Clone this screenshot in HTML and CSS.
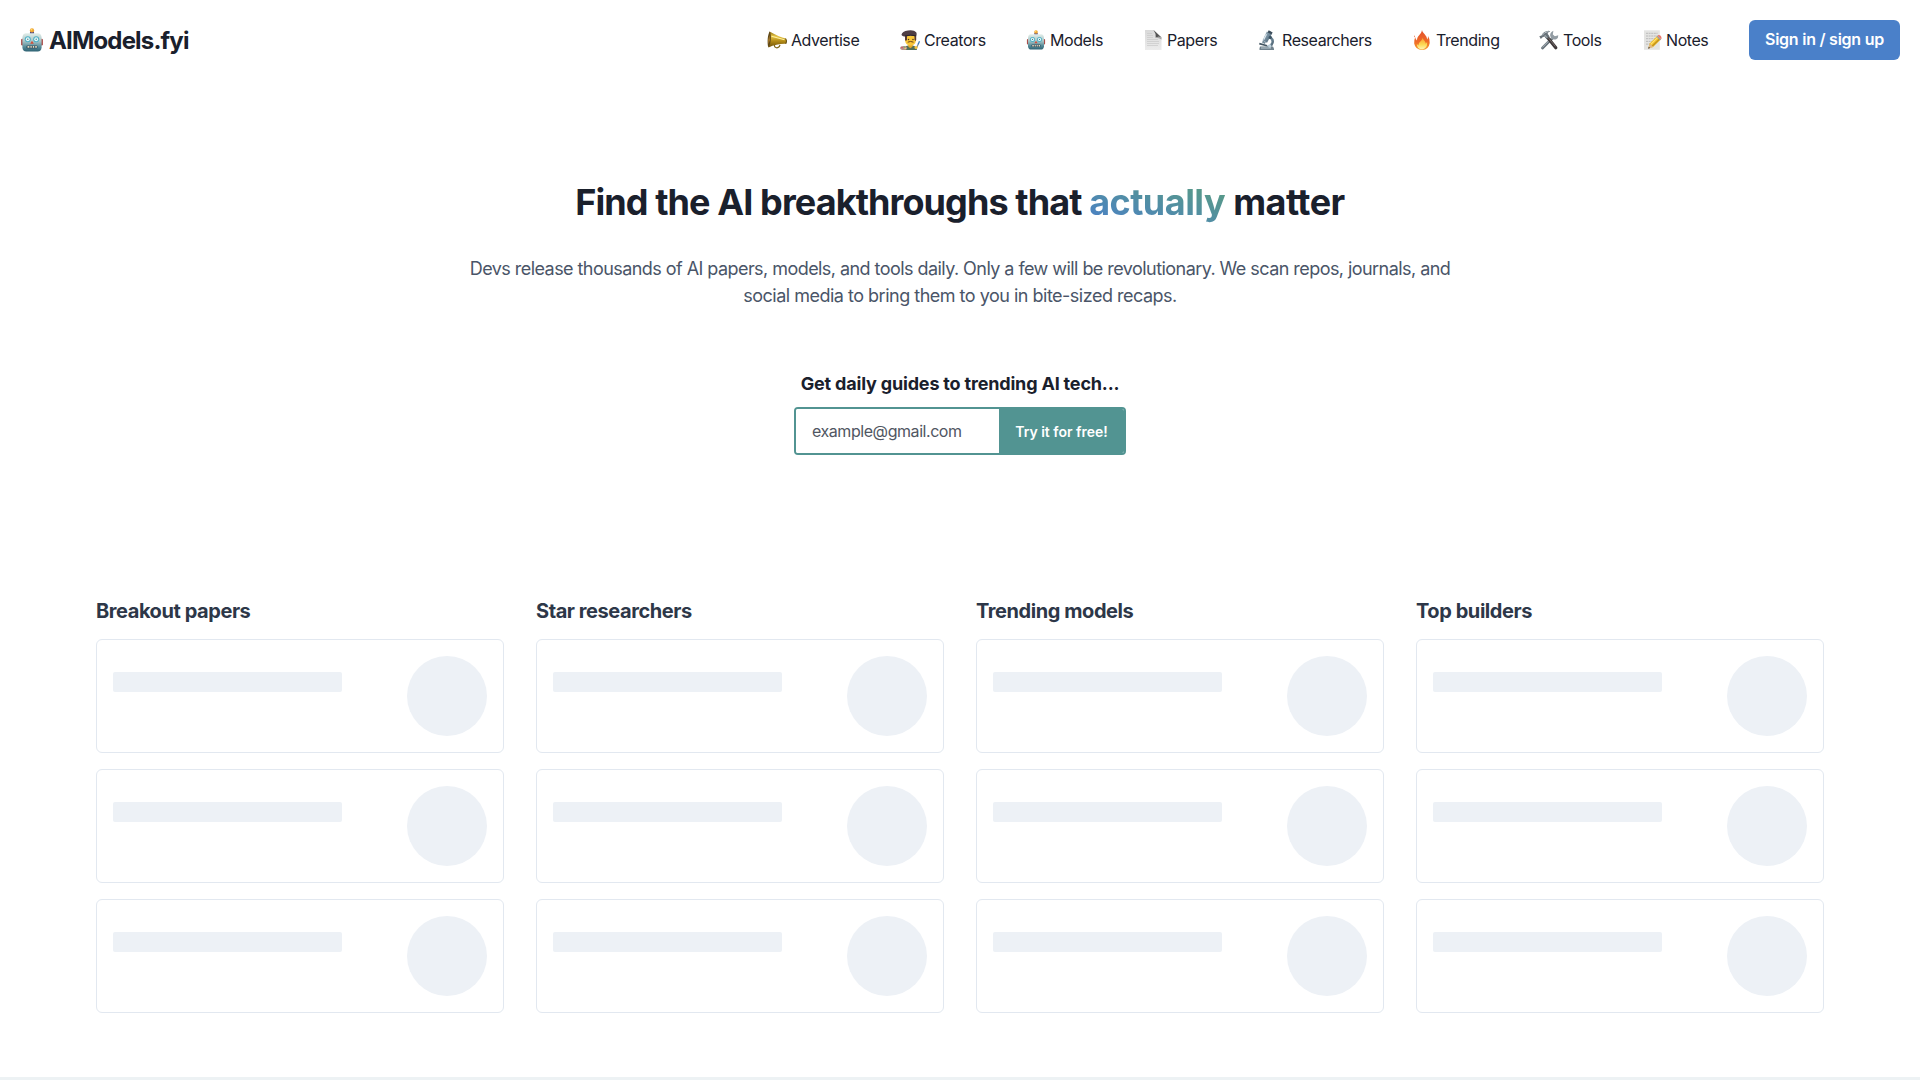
FILE: index.html
```
<!DOCTYPE html>
<html lang="en">
<head>
<meta charset="utf-8">
<title>AIModels.fyi</title>
<link rel="stylesheet" href="styles.css">
</head>
<body>
<svg class="defs" width="0" height="0" aria-hidden="true">
  <defs>
    <linearGradient id="face" x1="0" y1="0" x2="0" y2="1"><stop offset="0" stop-color="#e3eeea"/><stop offset=".45" stop-color="#a5c3c5"/><stop offset=".75" stop-color="#568b99"/><stop offset="1" stop-color="#2d6172"/></linearGradient>
    <linearGradient id="brass" x1="0" y1="0" x2="0" y2="1"><stop offset="0" stop-color="#8a6a0c"/><stop offset=".3" stop-color="#e6c548"/><stop offset=".6" stop-color="#b58d18"/><stop offset="1" stop-color="#6f5208"/></linearGradient>
    <linearGradient id="sheet" x1="0" y1="0" x2="0" y2="1"><stop offset="0" stop-color="#d9d9d9"/><stop offset="1" stop-color="#ececec"/></linearGradient>
    <linearGradient id="steel" x1="0" y1="0" x2="1" y2="1"><stop offset="0" stop-color="#b5c6d0"/><stop offset=".5" stop-color="#70899a"/><stop offset="1" stop-color="#475d6c"/></linearGradient>
    <linearGradient id="flame" x1="0" y1="0" x2="0" y2="1"><stop offset="0" stop-color="#e2502c"/><stop offset=".6" stop-color="#ef6b27"/><stop offset="1" stop-color="#f6a22c"/></linearGradient>
    <linearGradient id="core" x1="0" y1="0" x2="0" y2="1"><stop offset="0" stop-color="#f99a2b"/><stop offset=".6" stop-color="#fddb58"/><stop offset="1" stop-color="#fff6b9"/></linearGradient>
    <symbol id="robot" viewBox="0 0 20 20">
      <path d="M8.3 2.8h3.4v2.6H8.3z" fill="#4f4a86"/>
      <circle cx="10" cy="2" r="1.8" fill="#efa531"/>
      <circle cx="9.6" cy="1.4" r=".7" fill="#ffd86c"/>
      <rect x=".9" y="9" width="2.5" height="5.6" rx="1" fill="#a94d49"/>
      <rect x="16.6" y="9" width="2.5" height="5.6" rx="1" fill="#a94d49"/>
      <path d="M4.7 4.3h10.6Q17.8 4.6 18 8v8.2q-.3 3.3-3.2 3.4H5.2Q2.300 19.500 2 16.200V8Q2.200 4.600 4.700 4.300z" fill="url(#face)"/>
      <circle cx="6.500" cy="9.400" r="2.500" fill="#4eafc5"/>
      <circle cx="13.500" cy="9.400" r="2.500" fill="#4eafc5"/>
      <circle cx="6.500" cy="9.400" r="1.600" fill="#e6fbfb"/>
      <circle cx="13.500" cy="9.400" r="1.600" fill="#e6fbfb"/>
      <circle cx="6.500" cy="9.400" r=".6" fill="#54808d"/>
      <circle cx="13.500" cy="9.400" r=".6" fill="#54808d"/>
      <path d="M10 10.700l1.500 2.500h-3z" fill="#d34a34"/>
      <rect x="5.300" y="14.500" width="9.400" height="2.500" rx="1" fill="#355565"/>
      <path d="M6.300 15.100h1.500v1.300H6.300zm2.400 0h1.100v1.300H8.700zm2 0h1.100v1.300h-1.100zm2 0h1.300v1.300h-1.300z" fill="#ead9bd"/>
    </symbol>
  </defs>
</svg>

<header class="header">
  <a class="brand"><svg class="brand-icon"><use href="#robot"/></svg><span>AIModels.fyi</span></a>
  <nav class="nav">
    <a class="nav-item"><svg class="emoji" viewBox="0 0 20 20">
      <path d="M7 13.500l.8 3.400q2.300 1.900 4.600-.4l.6-1.600" fill="none" stroke="#7d6519" stroke-width="1.200"/>
      <path d="M2.500 1.400Q12 6.700 18.800 8.500q1.500 2.600.2 5.300Q10 13.500 1.500 17.400z" fill="url(#brass)"/>
      <path d="M2.700 1.400C.7 4.300.1 11.500 1.200 17.300c2.300-1.700 4-12 1.500-15.900z" fill="#604918"/>
      <path d="M2.200 5.200q-1 4.500-.6 9 1.700-4.600.6-9z" fill="#d59b38"/>
      <path d="M4.500 6.300l13 3.500" stroke="#fff2a1" stroke-width="1.100"/>
      <path d="M18.700 8.500q1.500 2.500.2 5.300" fill="none" stroke="#594311" stroke-width="1"/>
    </svg><span>Advertise</span></a>
    <a class="nav-item"><svg class="emoji" viewBox="0 0 20 20">
      <path d="M3.500 20q.3-4.100 4.700-4.600h4.300q4 .6 4.500 4.600z" fill="#526f58"/>
      <path d="M8.300 13.500h4.200v3.200l-2.100 1.500-2.100-1.500z" fill="#e4a62b"/>
      <path d="M5 6h11v4.500q-.8 5-5.500 5.300Q5.800 15.300 5 10.500z" fill="#f9c638"/>
      <path d="M5 5.500h2v4.300l-1 1.300-1-1.200zm9.500 0h1.700v4.400l-.8 1.100-.9-1.200z" fill="#5a3a30"/>
      <path d="M1.500 4.700Q2 1.300 8 .5q6-.8 8.200 1.700 1 1.900-.2 4.200-5-1.200-10.500.1Q2 6.500 1.500 4.700z" fill="#4e3d44"/>
      <path d="M5 5.900q5.600-1.500 11-.1" fill="none" stroke="#2d262b" stroke-width="1"/>
      <circle cx="8.500" cy="9.500" r=".75" fill="#4d351f"/><circle cx="13" cy="9.500" r=".75" fill="#4d351f"/>
      <path d="M7.700 12.200q2.800-1.500 5.800 0" fill="none" stroke="#6c431e" stroke-width="1"/>
      <ellipse cx="3.600" cy="18" rx="3.500" ry="2" fill="#b8918a"/>
      <circle cx="2" cy="17.500" r=".8" fill="#da4b64"/><circle cx="4.200" cy="17" r=".7" fill="#6ab35e"/><circle cx="5.300" cy="18.500" r=".7" fill="#f5df66"/>
      <path d="M16 19l2.400-5.200" stroke="#81929d" stroke-width="1.300"/>
      <path d="M18.200 14.200l1.300-2.900" stroke="#377dba" stroke-width="1.300"/>
      <circle cx="16" cy="17.500" r="1.500" fill="#f4c13c"/>
    </svg><span>Creators</span></a>
    <a class="nav-item"><svg class="emoji"><use href="#robot"/></svg><span>Models</span></a>
    <a class="nav-item"><svg class="emoji" viewBox="0 0 20 20">
      <path d="M2 0h8.700L18.500 7v13H2z" fill="url(#sheet)"/>
      <path d="M10.500 0L18.500 7.400q-3.200-1.300-5.800.4.600-4.200-2.200-7.800z" fill="#535353"/>
      <path d="M12.700 7.800q2.500-1.800 5.800-.4v2.200q-2.600-1.900-5.800-1.800z" fill="#a5a5a5"/>
      <path d="M4 3.500h5M4 5.500h6M4 7.500h6M4 9.500h11M4 11.500h12M4 13.500h12M4 15.500h11" stroke="#c9c9c9" stroke-width=".7"/>
    </svg><span>Papers</span></a>
    <a class="nav-item"><svg class="emoji" viewBox="0 0 20 20">
      <path d="M2 16.500h13l1 2.200v1.200H1.500v-1.500z" fill="#70818c"/>
      <path d="M11 7q4.500 1.700 3.500 5.700-.8 3.200-5 4.300" fill="none" stroke="url(#steel)" stroke-width="2.500"/>
      <path d="M8.800 1.600l4.900 2.700-4.700 8.500-4.400-2.500z" fill="url(#steel)"/>
      <path d="M10.700.2l4 2.200-1.200 2.200-4-2.200z" fill="#3d4f5c"/>
      <path d="M8.500 4.300l-2.800 5.300" stroke="#dce8ee" stroke-width="1.200"/>
      <circle cx="12.300" cy="7.400" r="1.600" fill="#3d5564"/>
      <path d="M1.500 12.800l7.800 2.100-.5 1.600-7.700-2.100z" fill="#455763"/>
      <path d="M4.900 10.500l2.900 1.700-1 1.800-2.800-1.500z" fill="#758b98"/>
      <circle cx="11.700" cy="16" r="1.700" fill="#bdd0db"/>
      <path d="M3 18h10" stroke="#d1dde3" stroke-width=".8"/>
    </svg><span>Researchers</span></a>
    <a class="nav-item"><svg class="emoji" viewBox="0 0 20 20">
      <path d="M10 0c.5 3.300 5 5 5.200 9.500q1-.9.800-3.500 2.200 3.300 1.700 7-.9 6.600-7.500 7-6.800 0-8-6.500-.3-3.200 1-6.200.5 2.500 1.800 3.300C4.700 5.700 9.500 4.600 10 0z" fill="url(#flame)"/>
      <path d="M2.300 5.300q.9 1 .6 2.200-1.300-.7-.6-2.200z" fill="#e75b2c"/>
      <path d="M10.500 7.600c.2 2.300 3.400 3.500 3.200 6.200l1.400-1.700q.7 6.500-4.800 7.400-5.400-.3-5.500-5.400l1.800 1.500c-.4-3.700 3.800-4.300 3.900-8z" fill="url(#core)"/>
    </svg><span>Trending</span></a>
    <a class="nav-item"><svg class="emoji" viewBox="0 0 20 20">
      <path d="M3.500 18L14.200 7.200" stroke="#68737b" stroke-width="2.800" stroke-linecap="round"/>
      <path d="M3.600 17.200L13.700 7" stroke="#b4bdc3" stroke-width=".9" stroke-linecap="round"/>
      <path d="M14.400.8l-.6 3.700 2 1.700 3.500-1q.2 3-2.100 4.100-2.800 1-4.900-1.300-2.300-2.800-.2-5.500Q13 1.300 14.400.8z" fill="#929ca3"/>
      <path d="M8 6.800l8.800 10.900" stroke="#3d3738" stroke-width="3.200" stroke-linecap="round"/>
      <path d="M9.500 8l6.800 8.400" stroke="#887c78" stroke-width=".8"/>
      <path d="M.3 6.300l2.200-.9Q4.500 1 9.700.7l1.600.9Q8.800 2 8.600 3.700l2 2.700-3 2.800L5.500 6.600 3.600 7.200 1.800 9z" fill="#697279"/>
      <path d="M3 5.500Q5.500 1.700 9.500 1.500M6 5.300l1.900 2.300" fill="none" stroke="#bcc5ca" stroke-width="1"/>
    </svg><span>Tools</span></a>
    <a class="nav-item"><svg class="emoji" viewBox="0 0 20 20">
      <path d="M2 .3h15.800v19.500H2z" fill="#e4e4e2"/>
      <path d="M4 3.300h11.500M4 6h11.500M4 8.700h10M4 11.400h7M4 14.100h4" stroke="#b6b6b6" stroke-width=".9" stroke-dasharray="2 .6"/>
      <path d="M6.300 18.300l1.300-4.700L15.200 6l3.600 3.500-7.600 7.500z" fill="#efbd2b"/>
      <path d="M8.800 14.300l7.700-7.700" stroke="#ffe476" stroke-width="1.100"/>
      <path d="M10.300 16.200l7.700-7.600" stroke="#b98b1d" stroke-width="1.100"/>
      <path d="M7.600 13.600l3.600 3.400-4.900 1.700z" fill="#dfb986"/>
      <path d="M6.800 16.800l1.300 1.200-2 .8z" fill="#403c3c"/>
      <path d="M14.500 6.700l1-1 3.600 3.500-1 1z" fill="#9a9fa1"/>
      <path d="M15.500 5.700l.8-.6q2.800-.2 3.300 3.300l-.6.8z" fill="#e9796d"/>
    </svg><span>Notes</span></a>
    <a class="signin">Sign in / sign up</a>
  </nav>
</header>

<main>
  <section class="hero">
    <h1 class="title"><span class="title-lead">Find the AI breakthroughs that </span><span class="title-accent">actually</span><span class="title-tail"> matter</span></h1>
    <p class="lead">Devs release thousands of AI papers, models, and tools daily. Only a few will be revolutionary. We scan repos, journals, and<br><span class="lead-end">social media to bring them to you in bite-sized recaps.</span></p>
    <p class="form-title">Get daily guides to trending AI tech...</p>
    <form class="signup">
      <input class="email" type="email" placeholder="example@gmail.com">
      <button class="submit" type="button">Try it for free!</button>
    </form>
  </section>

  <section class="columns">
    <div class="column">
      <h2>Breakout papers</h2>
      <div class="card"><div class="line"></div><div class="avatar"></div></div>
      <div class="card"><div class="line"></div><div class="avatar"></div></div>
      <div class="card"><div class="line"></div><div class="avatar"></div></div>
    </div>
    <div class="column">
      <h2>Star researchers</h2>
      <div class="card"><div class="line"></div><div class="avatar"></div></div>
      <div class="card"><div class="line"></div><div class="avatar"></div></div>
      <div class="card"><div class="line"></div><div class="avatar"></div></div>
    </div>
    <div class="column">
      <h2>Trending models</h2>
      <div class="card"><div class="line"></div><div class="avatar"></div></div>
      <div class="card"><div class="line"></div><div class="avatar"></div></div>
      <div class="card"><div class="line"></div><div class="avatar"></div></div>
    </div>
    <div class="column">
      <h2>Top builders</h2>
      <div class="card"><div class="line"></div><div class="avatar"></div></div>
      <div class="card"><div class="line"></div><div class="avatar"></div></div>
      <div class="card"><div class="line"></div><div class="avatar"></div></div>
    </div>
  </section>
</main>
<div class="footer-rule"></div>
</body>
</html>
```
FILE: styles.css
```
* {
  box-sizing: border-box;
}

body {
  margin: 0;
  height: 1080px;
  overflow: hidden;
  background: #fff;
  color: #1a202c;
  font-family: Inter, "Liberation Sans", sans-serif;
  font-size: 16px;
  line-height: 24px;
}

.defs {
  display: block;
}

h1, h2, p {
  margin: 0;
}

.header {
  display: flex;
  align-items: center;
  justify-content: space-between;
  height: 80px;
  padding: 0 20px;
}

.brand {
  display: flex;
  align-items: center;
  gap: 5px;
  font-size: 24px;
  font-weight: 700;
  letter-spacing: -0.84px;
}

.brand span {
  padding-top: 2px;
}

.brand-icon {
  width: 24px;
  height: 24px;
}

.nav {
  display: grid;
  grid-template-columns: 93px 86px 77px 75px 114px 87px 63px 67px 151px;
  column-gap: 40px;
  align-items: center;
}

.nav-item {
  display: flex;
  align-items: center;
  gap: 4px;
  letter-spacing: -0.42px;
  white-space: nowrap;
}

.emoji {
  flex: none;
  width: 20px;
  height: 20px;
}

.signin {
  height: 40px;
  padding-bottom: 2px;
  border-radius: 6px;
  background: #4a80c9;
  color: #fff;
  font-weight: 600;
  line-height: 38px;
  letter-spacing: -0.24px;
  text-align: center;
}

.hero {
  display: flex;
  flex-direction: column;
  align-items: center;
  padding-top: 101px;
  text-align: center;
}

.title {
  font-size: 36px;
  font-weight: 700;
  line-height: 43px;
  white-space: pre;
}

.title-lead {
  letter-spacing: -0.9px;
}

.title-accent {
  background: linear-gradient(to top right, #4a80c9, #5a9e7c);
  background-clip: text;
  -webkit-background-clip: text;
  color: transparent;
  letter-spacing: -0.52px;
}

.title-tail {
  letter-spacing: -0.5px;
}

.lead {
  margin-top: 31px;
  color: #4a5568;
  font-size: 18px;
  line-height: 27px;
  letter-spacing: -0.554px;
  white-space: nowrap;
}

.lead-end {
  letter-spacing: -0.5px;
}

.form-title {
  margin-top: 61px;
  font-size: 18px;
  font-weight: 700;
  line-height: 27px;
  letter-spacing: -0.18px;
}

.signup {
  display: flex;
  width: 332px;
  height: 48px;
  margin-top: 10px;
  overflow: hidden;
  border: 2px solid #529492;
  border-radius: 4px;
}

.email {
  flex: 1;
  min-width: 0;
  padding: 0 16px;
  border: 0;
  outline: 0;
  background: #fff;
  font: inherit;
  letter-spacing: -0.44px;
}

.email::placeholder {
  color: #505662;
}

.submit {
  width: 125px;
  padding: 0;
  border: 0;
  background: #529492;
  color: #fff;
  font: 600 14px Inter, "Liberation Sans", sans-serif;
}

.columns {
  display: grid;
  grid-template-columns: repeat(4, 1fr);
  column-gap: 32px;
  margin-top: 144px;
  padding: 0 96px;
}

.column {
  display: flex;
  flex-direction: column;
  gap: 16px;
}

h2 {
  color: #2d3748;
  font-size: 20px;
  font-weight: 700;
  line-height: 24px;
  letter-spacing: -0.43px;
}

.card {
  display: flex;
  justify-content: space-between;
  height: 114px;
  padding: 16px;
  border: 1px solid #e2e8f0;
  border-radius: 6px;
}

.line {
  width: 229px;
  height: 20px;
  margin-top: 16px;
  border-radius: 2px;
  background: #edf1f6;
}

.avatar {
  width: 80px;
  height: 80px;
  border-radius: 50%;
  background: #edf1f6;
}

.footer-rule {
  height: 3px;
  margin-top: 64px;
  background: #edf2f4;
}
```
